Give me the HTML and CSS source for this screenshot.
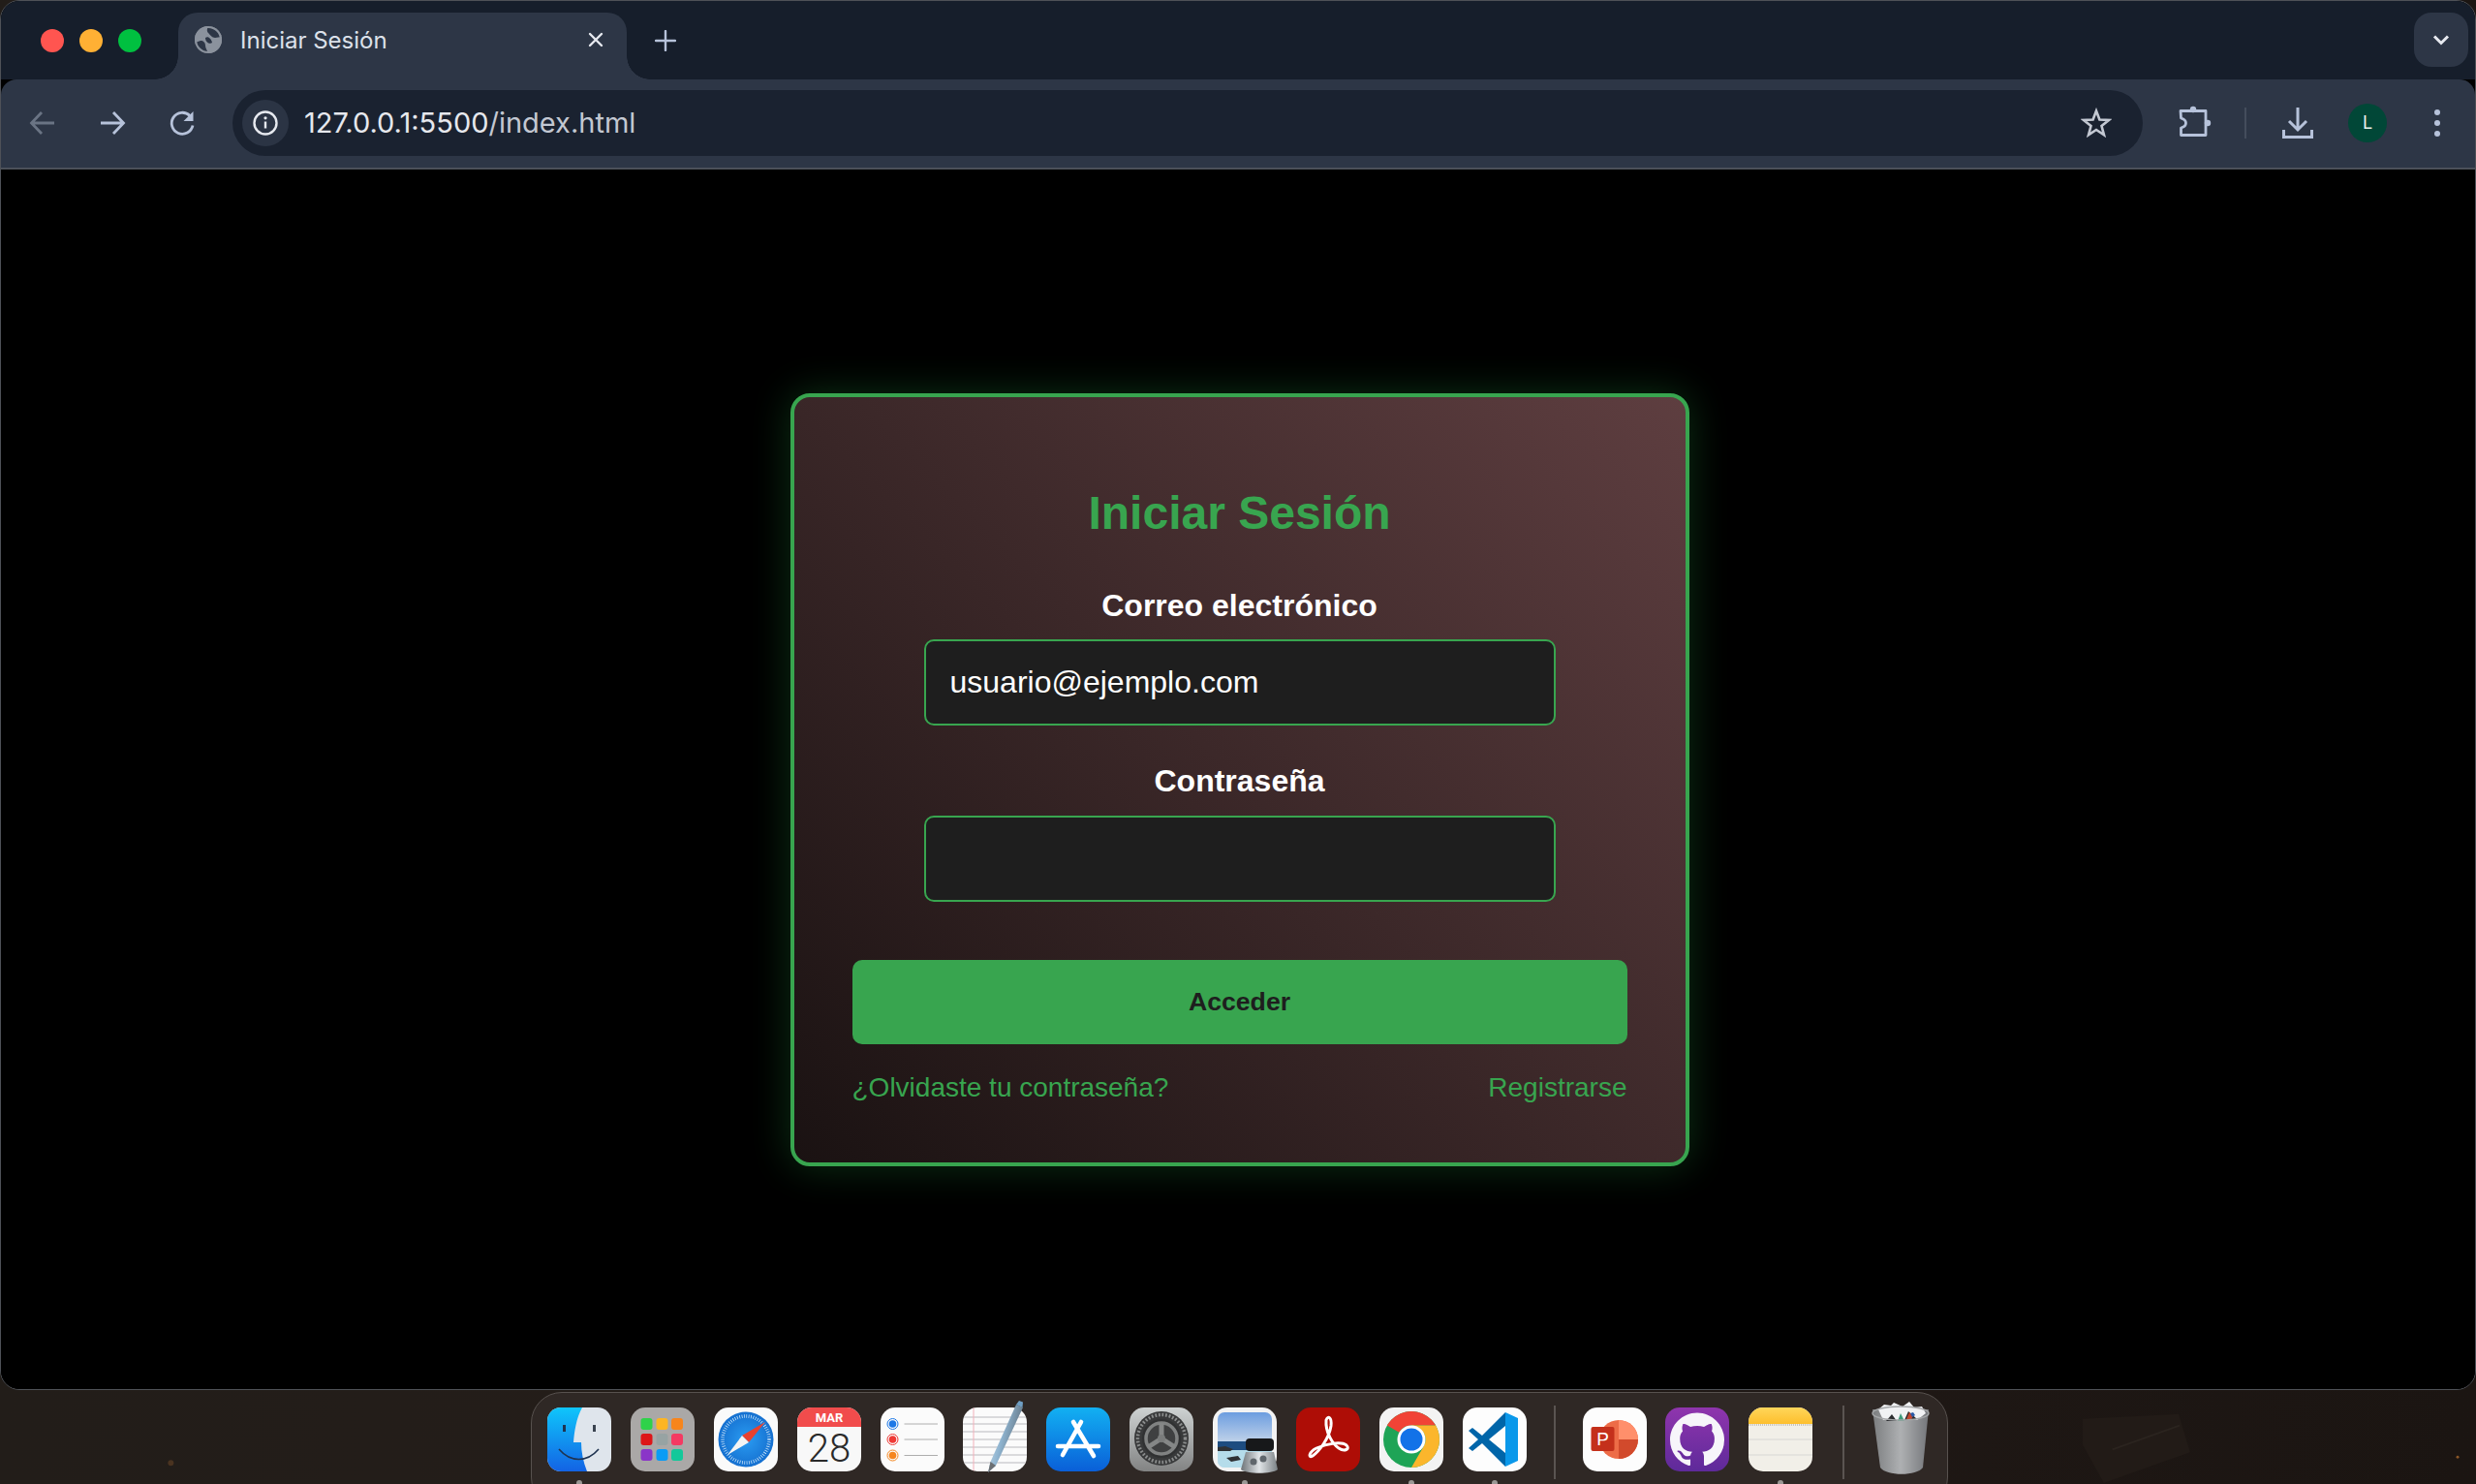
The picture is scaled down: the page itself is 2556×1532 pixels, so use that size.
FILE: index.html
```html
<!doctype html>
<html lang="es">
<head>
    <meta charset="utf-8">
    <title>Iniciar Sesión</title>
    <link rel="stylesheet" href="styles.css">
</head>
<body>
    <div class="window">
        <!-- Tab strip -->
        <div class="tabstrip">
            <div class="lights">
                <span class="light light-red"></span>
                <span class="light light-yellow"></span>
                <span class="light light-green"></span>
            </div>
            <div class="tab">
                <svg class="favicon" viewBox="0 0 28 28">
                    <circle cx="14" cy="14" r="14" fill="#8b929d"/>
                    <path d="M14 0A14 14 0 0 1 27.500 11L21 12C18 12 16 9 14 7 12 5 13 2 14 0Z" fill="#2d3646"/>
                    <path d="M.5 17L6 15C9 15 11 17 11 20 11 23 13 25 14 28A14 14 0 0 1 .5 17Z" fill="#2d3646"/>
                    <path d="M11 12C14 10 17 13 18 17 16 19 11 17 11 12Z" fill="#2d3646"/>
                    <circle cx="14" cy="14" r="13" fill="none" stroke="#8b929d" stroke-width="2"/>
                </svg>
                <span class="tab-title">Iniciar Sesión</span>
                <svg class="tab-close" viewBox="0 0 16 16"><path d="M2 2l12 12M14 2L2 14" stroke="#e6e9ef" stroke-width="2.400" stroke-linecap="round"/></svg>
            </div>
            <svg class="tab-new" viewBox="0 0 22 22"><path d="M11 1v20M1 11h20" stroke="#b6c2da" stroke-width="2.400" stroke-linecap="round"/></svg>
            <div class="tab-search">
                <svg viewBox="0 0 18 12" class="tab-search-icon"><path d="M2 2.500l7 7 7-7" fill="none" stroke="#e6e9ef" stroke-width="3"/></svg>
            </div>
        </div>

        <!-- Toolbar -->
        <div class="toolbar">
            <div class="tool"><svg viewBox="0 0 32 32"><path d="M28 16H5M15 5L4.500 16 15 27" fill="none" stroke="#6a7484" stroke-width="2.800"/></svg></div>
            <div class="tool"><svg viewBox="0 0 32 32"><path d="M4 16h23M17 5l10.500 11L17 27" fill="none" stroke="#b6c2da" stroke-width="2.800"/></svg></div>
            <div class="tool"><svg viewBox="0 0 32 32"><path d="M27 18.500A11 11 0 1 1 24 8.500" fill="none" stroke="#b6c2da" stroke-width="2.800"/><path d="M27.500 4v10H17.500z" fill="#b6c2da"/></svg></div>
            <div class="omnibox">
                <div class="site-info"><svg viewBox="0 0 28 28"><circle cx="14" cy="14" r="11.500" fill="none" stroke="#e6e9ef" stroke-width="2.400"/><path d="M14 12.500v7" stroke="#e6e9ef" stroke-width="2.400"/><circle cx="14" cy="8.800" r="1.600" fill="#e6e9ef"/></svg></div>
                <div class="url"><span class="url-host">127.0.0.1:5500</span><span class="url-rest">/index.html</span></div>
                <svg class="star" viewBox="0 0 32 32"><path d="M16 3.500l3.400 9 9.600.5-7.500 6 2.500 9.300-8-5.300-8 5.300 2.500-9.300-7.500-6 9.600-.5z" fill="none" stroke="#c3c8d2" stroke-width="2.600"/></svg>
            </div>
            <div class="tool"><svg viewBox="0 0 32 32"><path d="M3 3.500H29V28.500H3.500V21C7 20 8.500 18 8.500 16S7 12 3.500 11Z" fill="none" stroke="#b6c2da" stroke-width="2.800" stroke-linejoin="round"/><circle cx="16" cy="2" r="3.200" fill="#b6c2da"/><circle cx="31" cy="16" r="3.200" fill="#b6c2da"/></svg></div>
            <div class="tool-sep"></div>
            <div class="tool"><svg viewBox="0 0 32 32"><path d="M16 0V22M7 14l9 9 9-9" fill="none" stroke="#b6c2da" stroke-width="3"/><path d="M1.500 23v7.500h29V23" fill="none" stroke="#b6c2da" stroke-width="3"/></svg></div>
            <div class="tool"><div class="avatar">L</div></div>
            <div class="tool"><svg viewBox="0 0 32 32"><circle cx="16" cy="5" r="3" fill="#b6c2da"/><circle cx="16" cy="16" r="3" fill="#b6c2da"/><circle cx="16" cy="27" r="3" fill="#b6c2da"/></svg></div>
        </div>

        <!-- Page -->
        <div class="page">
            <div class="login-card">
                <h2 class="login-title">Iniciar Sesión</h2>
                <form class="login-form">
                    <label class="field-label">Correo electrónico</label>
                    <input class="field-input" type="email" value="usuario@ejemplo.com">
                    <label class="field-label field-label-second">Contraseña</label>
                    <input class="field-input" type="password">
                    <button class="login-btn" type="button">Acceder</button>
                </form>
                <div class="login-links">
                    <a href="#">¿Olvidaste tu contraseña?</a>
                    <a href="#">Registrarse</a>
                </div>
            </div>
        </div>
    </div>

    <!-- Dock -->
    <div class="dock-area">
        <svg class="wallpaper" viewBox="0 0 2556 98">
            <path d="M2159 30l100-5 12 40-90 32-22-40z" fill="#221b17"/>
            <path d="M2190 62l70-25" stroke="#2b241f" stroke-width="2"/>
            <circle cx="165" cy="76" r="3" fill="#4a3320"/>
            <circle cx="2550" cy="70" r="1.500" fill="#8a5526"/>
        </svg>
        <div class="dock">
            <div class="dock-item running">
                <svg class="app" viewBox="0 0 66 66">
                    <defs>
                        <linearGradient id="finderBlue" x1="0" y1="0" x2="0" y2="1"><stop offset="0" stop-color="#0fc6fb"/><stop offset="1" stop-color="#1363e4"/></linearGradient>
                        <clipPath id="finderClip"><rect width="66" height="66" rx="14"/></clipPath>
                    </defs>
                    <g clip-path="url(#finderClip)">
                        <rect width="66" height="66" fill="#dfe5ec"/>
                        <path d="M0 0H36C30 11 28 24 27 36H35C35 46 37 56 41 66H0Z" fill="url(#finderBlue)"/>
                        <rect x="16" y="18" width="3" height="7" fill="#1f3350"/>
                        <rect x="47" y="18" width="3" height="7" fill="#3a4350"/>
                        <path d="M12 43C24 57 41 57 53 43" fill="none" stroke="#1f3350" stroke-width="1.600"/>
                    </g>
                </svg>
            </div>
            <div class="dock-item">
                <svg class="app" viewBox="0 0 66 66">
                    <rect width="66" height="66" rx="15" fill="#aaa8a7"/>
                    <rect x="10.500" y="11" width="12" height="12" rx="3" fill="#2fd24a"/>
                    <rect x="26.500" y="11" width="12" height="12" rx="3" fill="#fdb523"/>
                    <rect x="42" y="11" width="12" height="12" rx="3" fill="#f7851c"/>
                    <rect x="10.500" y="27" width="12" height="12" rx="3" fill="#dd1518"/>
                    <rect x="26.500" y="27" width="12" height="12" rx="3" fill="#97a3a3"/>
                    <rect x="42" y="27" width="12" height="12" rx="3" fill="#f43a62"/>
                    <rect x="10.500" y="43" width="12" height="12" rx="3" fill="#8a35c8"/>
                    <rect x="26.500" y="43" width="12" height="12" rx="3" fill="#0a9cf5"/>
                    <rect x="42" y="43" width="12" height="12" rx="3" fill="#13c89a"/>
                </svg>
            </div>
            <div class="dock-item">
                <svg class="app" viewBox="0 0 66 66">
                    <defs><radialGradient id="safariBlue"><stop offset="0" stop-color="#2a9cf2"/><stop offset="1" stop-color="#1570d0"/></radialGradient></defs>
                    <rect width="66" height="66" rx="15" fill="#fafafa"/>
                    <circle cx="33" cy="33" r="28.500" fill="url(#safariBlue)"/>
                    <circle cx="33" cy="33" r="24" fill="none" stroke="#d8ecfb" stroke-width="3.500" stroke-dasharray="0.7 1.700"/>
                    <path d="M53 15L29 29l7 7z" fill="#e8412f"/>
                    <path d="M14 49L29 29l7 7z" fill="#f4f4f4"/>
                </svg>
            </div>
            <div class="dock-item">
                <svg class="app" viewBox="0 0 66 66">
                    <rect width="66" height="66" rx="15" fill="#f8f8f8"/>
                    <path d="M0 20V15A15 15 0 0 1 15 0h36a15 15 0 0 1 15 15v5z" fill="#f14c4c"/>
                    <text class="cal-month" x="33" y="15" text-anchor="middle">MAR</text>
                    <text class="cal-day" x="33" y="56" text-anchor="middle">28</text>
                </svg>
            </div>
            <div class="dock-item">
                <svg class="app" viewBox="0 0 66 66">
                    <rect width="66" height="66" rx="15" fill="#fbfbfb"/>
                    <circle cx="12.500" cy="17" r="5.500" fill="none" stroke="#1e78e6" stroke-width="1"/><circle cx="12.500" cy="17" r="3.800" fill="#1e78e6"/>
                    <circle cx="12.500" cy="33" r="5.500" fill="none" stroke="#ef3a36" stroke-width="1"/><circle cx="12.500" cy="33" r="3.800" fill="#ef3a36"/>
                    <circle cx="12.500" cy="49.500" r="5.500" fill="none" stroke="#f5861f" stroke-width="1"/><circle cx="12.500" cy="49.500" r="3.800" fill="#f5861f"/>
                    <path d="M24.500 17H59M24.500 33H59M24.500 49.500H59" stroke="#aeaeae" stroke-width="1"/>
                </svg>
            </div>
            <div class="dock-item">
                <svg class="app" viewBox="0 0 66 66">
                    <defs>
                        <linearGradient id="penBody" x1="0" y1="0" x2="1" y2="0.400"><stop offset="0" stop-color="#d8e8f2"/><stop offset="0.500" stop-color="#8fb4d0"/><stop offset="1" stop-color="#5f6f7c"/></linearGradient>
                        <clipPath id="pageClip"><rect width="66" height="66" rx="15"/></clipPath>
                    </defs>
                    <rect width="66" height="66" rx="15" fill="#fbfbfb"/>
                    <g clip-path="url(#pageClip)">
                        <path d="M0 10H66M0 17H66M0 25H66M0 33H66M0 41H66M0 49H66M0 57H66" stroke="#b9b9bd" stroke-width="1"/>
                        <path d="M11 0V66" stroke="#f2b0ba" stroke-width="1"/>
                    </g>
                    <path d="M26 67L28.500 56 55 -3 62 0 34 60z" fill="url(#penBody)"/>
                    <path d="M55 -3l3-4 4 1.500-.5 5.500z" fill="#6f9fc4"/>
                    <path d="M26 67l2.500-11 5.500 4z" fill="#6b6f73"/>
                </svg>
            </div>
            <div class="dock-item">
                <svg class="app" viewBox="0 0 66 66">
                    <defs><linearGradient id="storeBlue" x1="0" y1="0" x2="0" y2="1"><stop offset="0" stop-color="#12b0f2"/><stop offset="1" stop-color="#0a5fd8"/></linearGradient></defs>
                    <rect width="66" height="66" rx="15" fill="url(#storeBlue)"/>
                    <path d="M28 15L49 50M36 15L17 49M12 40H54" fill="none" stroke="#fff" stroke-width="4.600" stroke-linecap="round"/>
                </svg>
            </div>
            <div class="dock-item">
                <svg class="app" viewBox="0 0 66 66">
                    <defs><linearGradient id="gearBg" x1="0" y1="0" x2="0" y2="1"><stop offset="0" stop-color="#ced2d2"/><stop offset="1" stop-color="#828383"/></linearGradient></defs>
                    <rect width="66" height="66" rx="15" fill="url(#gearBg)"/>
                    <circle cx="33" cy="32" r="28" fill="#38393a"/>
                    <circle cx="33" cy="32" r="24.500" fill="none" stroke="#8a8c8c" stroke-width="3.500" stroke-dasharray="1.800 1.800"/>
                    <circle cx="33" cy="32" r="20" fill="#303132"/>
                    <circle cx="33" cy="32" r="16" fill="#3f4041" stroke="#808282" stroke-width="3.500"/>
                    <path d="M33 32V16M33 32L19 41M33 32l14 9" stroke="#858787" stroke-width="5"/>
                    <circle cx="33" cy="32" r="4" fill="#7a7c7c"/>
                </svg>
            </div>
            <div class="dock-item running">
                <svg class="app" viewBox="0 0 66 66">
                    <defs>
                        <linearGradient id="photoSky" x1="0" y1="0" x2="0" y2="1"><stop offset="0" stop-color="#6c9de0"/><stop offset="0.600" stop-color="#c9d8ea"/></linearGradient>
                        <linearGradient id="loupeGlass" x1="0" y1="0" x2="1" y2="0"><stop offset="0" stop-color="#6d7377"/><stop offset="0.500" stop-color="#e0e4e7"/><stop offset="1" stop-color="#7b8185"/></linearGradient>
                    </defs>
                    <rect width="66" height="66" rx="15" fill="#f3f3f3"/>
                    <rect x="5" y="5" width="56" height="57" rx="7" fill="url(#photoSky)"/>
                    <path d="M5 35h56v20H5z" fill="#1d4c80"/>
                    <path d="M5 44h56v11a7 7 0 0 1-7 7H12a7 7 0 0 1-7-7z" fill="#b5dcea"/>
                    <path d="M5 41l8-1 8 3-3 2H5zM14 52l12-2 3 4-10 2z" fill="#2f3134"/>
                    <path d="M34 46h29l4 18c-6 5-32 5-38 0z" fill="url(#loupeGlass)"/>
                    <rect x="34" y="32" width="29" height="13" rx="4" fill="#17181a"/>
                    <circle cx="42" cy="56" r="3.500" fill="#5f666c"/>
                    <circle cx="52" cy="53" r="3.500" fill="#5f666c"/>
                </svg>
            </div>
            <div class="dock-item">
                <svg class="app" viewBox="0 0 66 66">
                    <rect width="66" height="66" rx="15" fill="#ae0d06"/>
                    <path d="M31 13C33 8 37 10 36 19 34 32 24 45 17 50 12 53 13 46 21 42 32 37 47 35 52 39 56 43 50 46 44 42 38 38 30 26 31 13Z" fill="none" stroke="#fff" stroke-width="3"/>
                </svg>
            </div>
            <div class="dock-item running">
                <svg class="app" viewBox="0 0 66 66">
                    <rect width="66" height="66" rx="15" fill="#f3f3f3"/>
                    <circle cx="33" cy="33" r="29" fill="#1ea456"/>
                    <path d="M7.900 18.500A29 29 0 0 1 58.100 18.500H33A14.500 14.500 0 0 0 20.400 25.700Z" fill="#f14336"/>
                    <path d="M58.100 18.500A29 29 0 0 1 33 62L45.600 40.300A14.500 14.500 0 0 0 45.600 25.700L33 18.500Z" fill="#fbb62c"/>
                    <circle cx="33" cy="33" r="14.500" fill="#fff"/>
                    <circle cx="33" cy="33" r="11.500" fill="#1272e8"/>
                </svg>
            </div>
            <div class="dock-item running">
                <svg class="app" viewBox="0 0 66 66">
                    <rect width="66" height="66" rx="15" fill="#fdfdfd"/>
                    <path d="M44 5l13 6v44l-13 6z" fill="#0a98ea"/>
                    <path d="M44 5L20 29 10 21l-4 3 10 9-10 9 4 3 10-8 24 24V47L27 33 44 19z" fill="#0065a9"/>
                </svg>
            </div>
            <div class="dock-sep"></div>
            <div class="dock-item">
                <svg class="app" viewBox="0 0 66 66">
                    <rect width="66" height="66" rx="15" fill="#fdfdfd"/>
                    <circle cx="37" cy="33" r="20" fill="#ed6c47"/>
                    <path d="M37 13a20 20 0 0 1 20 20H37z" fill="#ff8f6b"/>
                    <path d="M57 33a20 20 0 0 1-20 20V33z" fill="#d24a2c"/>
                    <rect x="8.500" y="20" width="24" height="25" rx="2" fill="#c4301b"/>
                    <text class="ppt-letter" x="20.500" y="39" text-anchor="middle">P</text>
                </svg>
            </div>
            <div class="dock-item">
                <svg class="app" viewBox="0 0 66 66">
                    <defs><linearGradient id="ghBg" x1="0" y1="0" x2="0" y2="1"><stop offset="0" stop-color="#8f35ad"/><stop offset="1" stop-color="#5e2a9a"/></linearGradient></defs>
                    <rect width="66" height="66" rx="15" fill="url(#ghBg)"/>
                    <path transform="translate(5 5.500) scale(3.500)" d="M8 0C3.580 0 0 3.580 0 8c0 3.540 2.290 6.530 5.470 7.590.4.070.55-.17.55-.38 0-.19-.01-.82-.01-1.490-2.010.37-2.530-.49-2.690-.94-.09-.23-.48-.94-.82-1.130-.28-.15-.68-.52-.01-.53.63-.01 1.080.58 1.230.82.72 1.210 1.870.87 2.330.66.070-.52.28-.87.51-1.070-1.780-.2-3.640-.89-3.640-3.950 0-.87.31-1.590.82-2.150-.08-.2-.36-1.020.08-2.120 0 0 .67-.21 2.200.82.64-.18 1.320-.27 2-.27.68 0 1.360.09 2 .27 1.530-1.040 2.200-.82 2.200-.82.44 1.100.16 1.920.08 2.120.51.56.82 1.270.82 2.150 0 3.070-1.870 3.750-3.650 3.950.29.25.54.73.54 1.480 0 1.070-.01 1.930-.01 2.200 0 .21.15.46.55.38A8.013 8.013 0 0 0 16 8c0-4.420-3.580-8-8-8z" fill="#f7f5fa"/>
                </svg>
            </div>
            <div class="dock-item running">
                <svg class="app" viewBox="0 0 66 66">
                    <defs><linearGradient id="notesTop" x1="0" y1="0" x2="0" y2="1"><stop offset="0" stop-color="#ffd65a"/><stop offset="1" stop-color="#fdbf2d"/></linearGradient></defs>
                    <rect width="66" height="66" rx="15" fill="#f1efe8"/>
                    <path d="M0 17V15A15 15 0 0 1 15 0h36a15 15 0 0 1 15 15v2z" fill="url(#notesTop)"/>
                    <path d="M0 18H66" stroke="#b9b7ae" stroke-width="1.500" stroke-dasharray="1 1"/>
                    <path d="M0 33H66M0 49H66" stroke="#d8d7d3" stroke-width="1.200"/>
                </svg>
            </div>
            <div class="dock-sep dock-sep-last"></div>
            <div class="dock-item dock-item-trash">
                <svg class="trash" viewBox="0 0 60 75">
                    <defs>
                        <linearGradient id="trashBody" x1="0" y1="0" x2="1" y2="0"><stop offset="0" stop-color="#7b7d7f"/><stop offset="0.500" stop-color="#aeb0b2"/><stop offset="1" stop-color="#74767a"/></linearGradient>
                    </defs>
                    <path d="M1 8h58l-6 60c-6 9-38 9-44 0z" fill="url(#trashBody)"/>
                    <path d="M7 8l6-5 7 1 3-3 9 4 7-5 5 6 8-1 4 7-9 7H12z" fill="#f1f2f4"/>
                    <path d="M15 20l6-7 5 7zM34 19l4-9 9 8z" fill="#2c2d30"/>
                    <path d="M27 20l3-8 4 8z" fill="#3f9a7a"/>
                    <path d="M36 18l3-7 4 3-2 5z" fill="#c0452f"/>
                    <path d="M40 12l3-1 2 3-3 2z" fill="#2a5aa8"/>
                    <ellipse cx="30" cy="12" rx="29" ry="7" fill="none" stroke="#a4a6a8" stroke-width="1.500"/>
                </svg>
            </div>
        </div>
    </div>
</body>
</html>
```

FILE: styles.css
```css
html, body {
    width: 100%;
    height: 100%;
}

body {
    margin: 0;
    padding: 0;
    height: 1532px;
    overflow: hidden;
    display: flex;
    flex-direction: column;
    font-family: "Liberation Sans", Arial, sans-serif;
    background: linear-gradient(90deg, #221d19 0%, #241d19 30%, #1f1815 70%, #1b1512 100%);
}

/* Browser window */
.window {
    height: 1435px;
    box-sizing: border-box;
    display: flex;
    flex-direction: column;
    flex-shrink: 0;
    border: 1px solid #4e5157;
    border-radius: 20px;
    overflow: hidden;
    background: #000;
}

.tabstrip {
    height: 81px;
    box-sizing: border-box;
    padding-top: 12px;
    display: flex;
    align-items: flex-start;
    background: #161e2b;
    flex-shrink: 0;
}

.lights {
    display: flex;
    gap: 16px;
    margin: 17px 38px 0 41px;
}

.light {
    width: 24px;
    height: 24px;
    border-radius: 50%;
}

.light-red { background: #ff5550; }
.light-yellow { background: #ffb034; }
.light-green { background: #00c040; }

.tab {
    position: relative;
    width: 463px;
    height: 69px;
    box-sizing: border-box;
    padding: 0 24px 13px 17px;
    display: flex;
    align-items: center;
    background: #2d3646;
    border-radius: 20px 20px 0 0;
}

/* the little curves at the foot of the active tab */
.tab::before,
.tab::after {
    content: "";
    position: absolute;
    bottom: 0;
    width: 24px;
    height: 24px;
}

.tab::before {
    left: -24px;
    background: radial-gradient(circle at 0 0, #161e2b 23.500px, #2d3646 24px);
}

.tab::after {
    right: -24px;
    background: radial-gradient(circle at 100% 0, #161e2b 23.500px, #2d3646 24px);
}

.favicon {
    width: 28px;
    height: 28px;
    flex-shrink: 0;
}

.tab-title {
    flex: 1;
    margin-left: 19px;
    font-family: Inter, sans-serif;
    font-size: 24px;
    color: #dce1ea;
    white-space: nowrap;
}

.tab-close {
    width: 16px;
    height: 16px;
}

.tab-new {
    width: 22px;
    height: 22px;
    margin: 18px 0 0 29px;
}

.tab-search {
    width: 56px;
    height: 56px;
    margin-left: auto;
    margin-right: 7px;
    display: flex;
    align-items: center;
    justify-content: center;
    background: #2d3646;
    border-radius: 18px;
}

.tab-search-icon {
    width: 18px;
    height: 12px;
}

.toolbar {
    height: 93px;
    box-sizing: border-box;
    padding: 0 19px 2px 23px;
    display: flex;
    align-items: center;
    gap: 32px;
    flex-shrink: 0;
    background: #2d3646;
    border-bottom: 2px solid #4b5059;
    border-radius: 16px 16px 0 0;
    position: relative;
}

.tool {
    width: 40px;
    height: 40px;
    display: flex;
    align-items: center;
    justify-content: center;
    flex-shrink: 0;
}

.tool svg {
    width: 32px;
    height: 32px;
    overflow: visible;
}

.tool-sep {
    width: 2px;
    height: 32px;
    margin: 0 1px;
    background: #444d5c;
    flex-shrink: 0;
}

.omnibox {
    flex: 1;
    height: 68px;
    box-sizing: border-box;
    padding: 0 32px 0 10px;
    display: flex;
    align-items: center;
    background: #1a2230;
    border-radius: 34px;
}

.site-info {
    width: 48px;
    height: 48px;
    display: flex;
    align-items: center;
    justify-content: center;
    background: #2b3444;
    border-radius: 50%;
}

.site-info svg {
    width: 28px;
    height: 28px;
}

.url {
    flex: 1;
    margin-left: 16px;
    font-family: Inter, sans-serif;
    font-size: 29px;
}

.url-host { color: #e6e8ed; }
.url-rest { color: #c3c8d2; }

.star {
    width: 32px;
    height: 32px;
}

.avatar {
    width: 40px;
    height: 40px;
    border-radius: 50%;
    background: #014737;
    color: #e8f0ec;
    font-family: Inter, sans-serif;
    font-size: 18px;
    line-height: 40px;
    text-align: center;
}

/* Login page */
.page {
    flex: 1;
    padding: 1px 0 0 3px;
    display: flex;
    align-items: center;
    justify-content: center;
    background: #000;
}

.login-card {
    width: 928px;
    height: 798px;
    box-sizing: border-box;
    padding: 92px 60px 0;
    border: 4px solid #38a54f;
    border-radius: 20px;
    background: linear-gradient(45deg, #1a1212, #5e3e40);
    box-shadow: 0 0 40px rgba(40, 167, 69, 0.3);
}

.login-title {
    margin: 0 0 50px;
    font-size: 48px;
    font-weight: bold;
    text-align: center;
    color: #38a54f;
}

.login-form {
    display: flex;
    flex-direction: column;
    align-items: center;
}

.field-label {
    margin-bottom: 16px;
    font-size: 32px;
    font-weight: bold;
    color: #fff;
}

.field-label-second {
    margin-top: 39px;
    margin-bottom: 17px;
}

.field-input {
    width: 652px;
    height: 89px;
    box-sizing: border-box;
    padding: 0 25px;
    font-family: "Liberation Sans", Arial, sans-serif;
    font-size: 32px;
    color: #fff;
    background: #1e1e1e;
    border: 2px solid #38a54f;
    border-radius: 10px;
}

.login-btn {
    width: 100%;
    height: 87px;
    margin-top: 60px;
    font-family: "Liberation Sans", Arial, sans-serif;
    font-size: 26.667px;
    font-weight: bold;
    color: #1e1e1e;
    background: #38a54f;
    border: none;
    border-radius: 10px;
}

.login-links {
    margin-top: 29px;
    display: flex;
    justify-content: space-between;
    font-size: 28px;
}

.login-links a {
    color: #38a54f;
    text-decoration: none;
}

/* Dock */
.dock-area {
    position: relative;
    flex: 1;
    padding-left: 3px;
    display: flex;
    justify-content: center;
    align-items: flex-start;
    overflow: hidden;
}

.wallpaper {
    position: absolute;
    left: 0;
    top: 0;
    width: 2556px;
    height: 97px;
}

.dock {
    position: relative;
    width: 1463px;
    height: 120px;
    margin-top: 2px;
    box-sizing: border-box;
    padding: 15px 18px 0 16px;
    display: flex;
    align-items: flex-start;
    gap: 19.900px;
    background: #2f2825;
    border: 1.500px solid #57514e;
    border-radius: 32px;
    flex-shrink: 0;
}

.dock-item {
    position: relative;
    width: 66px;
    height: 66px;
    flex-shrink: 0;
}

.dock-item.running::after {
    content: "";
    position: absolute;
    left: 30px;
    top: 75px;
    width: 6px;
    height: 6px;
    border-radius: 50%;
    background: #9a9794;
}

.dock-item-trash {
    width: 60px;
    margin-top: -6px;
}

.dock-sep {
    width: 2px;
    height: 76px;
    margin: -2px 8px 0;
    background: #5a5451;
    flex-shrink: 0;
}

.dock-sep-last {
    margin-left: 11px;
}

.app {
    display: block;
    width: 66px;
    height: 66px;
    overflow: visible;
}

.trash {
    display: block;
    width: 60px;
    height: 75px;
}

.cal-month {
    font-family: Roboto, sans-serif;
    font-size: 13px;
    font-weight: 700;
    fill: #fff;
}

.cal-day {
    font-family: Roboto, sans-serif;
    font-size: 40px;
    font-weight: 300;
    fill: #2a2a2a;
}

.ppt-letter {
    font-family: "Liberation Sans", Arial, sans-serif;
    font-size: 19px;
    fill: #fff;
}
```
